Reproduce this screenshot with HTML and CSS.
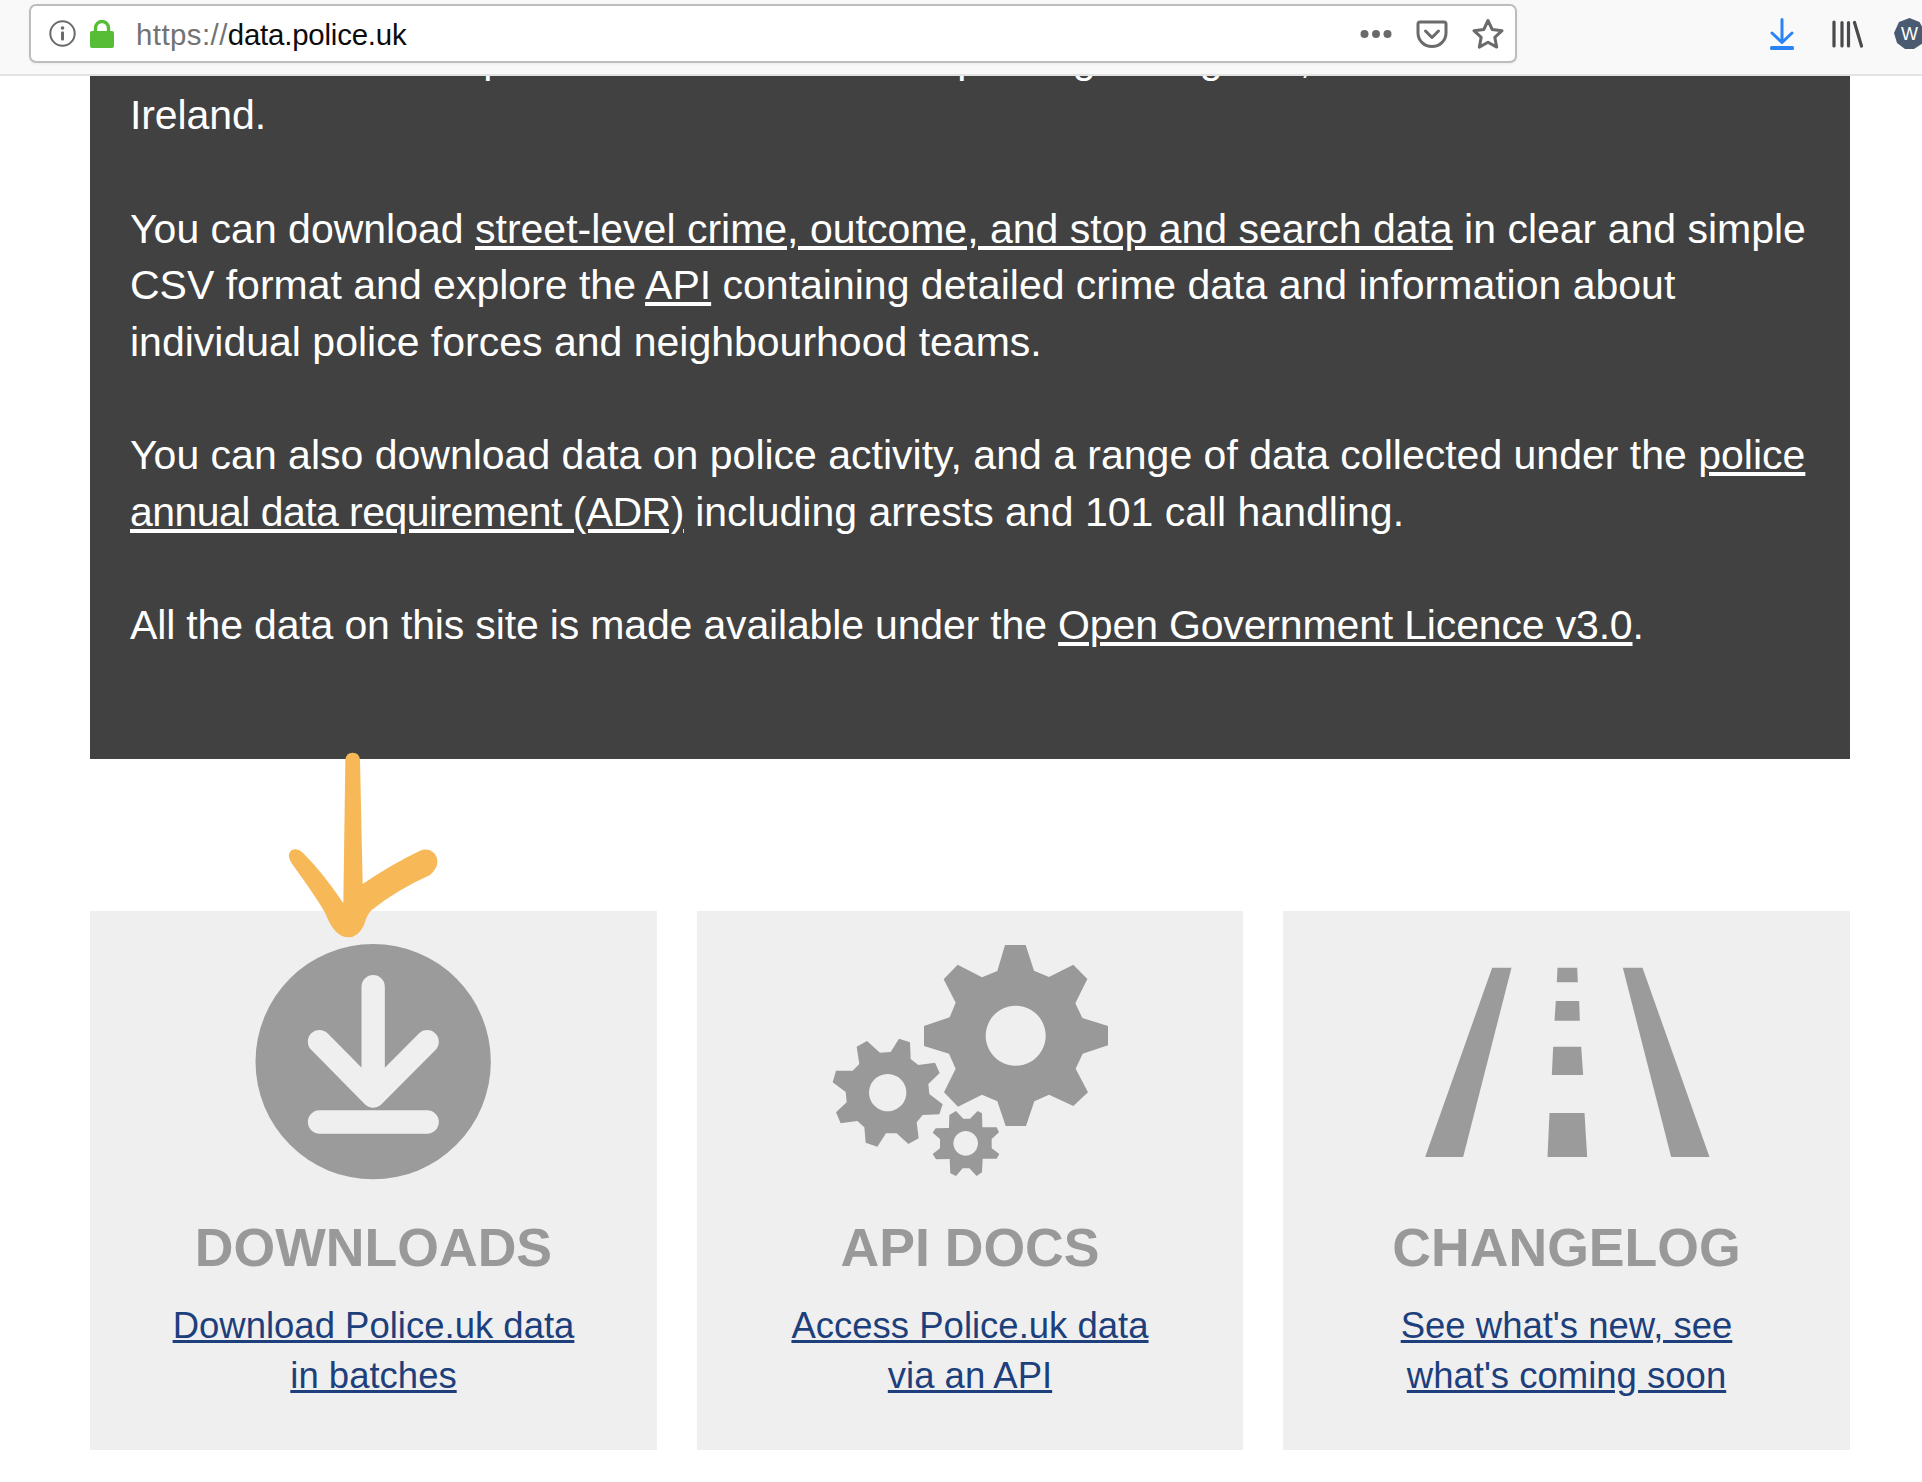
FILE: index.html
```html
<!DOCTYPE html>
<html lang="en"><head><meta charset="utf-8"><title>data.police.uk</title><link rel="stylesheet" href="styles.css"></head>
<body>
<header class="toolbar">
  <div class="urlbar">
    <svg class="i-info" viewBox="0 0 27 27"><circle cx="13.5" cy="13.5" r="12.2" fill="none" stroke="#6a6a6a" stroke-width="2"/><circle cx="13.5" cy="8" r="1.8" fill="#6a6a6a"/><rect x="12" y="11.5" width="3" height="9" rx="1" fill="#6a6a6a"/></svg>
    <svg class="i-lock" viewBox="0 0 24 28"><path d="M5.5 12V8a6.5 6.5 0 0 1 13 0v4" fill="none" stroke="#58bd36" stroke-width="3.4"/><rect y="11" width="24" height="17" rx="2" fill="#58bd36"/></svg>
    <span class="url"><span class="dim">https://</span><span class="host">data.police.uk</span></span>
    <svg class="i-dots" viewBox="0 0 32 10"><circle cx="4.5" cy="5" r="4" fill="#6a6a6a"/><circle cx="16" cy="5" r="4" fill="#6a6a6a"/><circle cx="27.5" cy="5" r="4" fill="#6a6a6a"/></svg>
    <svg class="i-pocket" viewBox="0 0 32 28"><path d="M4 2h24a2 2 0 0 1 2 2v9a14 13.500 0 0 1-28 0V4a2 2 0 0 1 2-2z" fill="none" stroke="#6a6a6a" stroke-width="3"/><path d="M9.500 11l6.500 6.500 6.500-6.500" fill="none" stroke="#6a6a6a" stroke-width="3" stroke-linecap="round" stroke-linejoin="round"/></svg>
    <svg class="i-star" viewBox="0 0 32 32"><path d="M16 2.500l4.200 9 9.800 1.200-7.200 6.700 1.900 9.700-8.700-4.800-8.700 4.800 1.900-9.700L2 12.700l9.800-1.200z" fill="none" stroke="#6a6a6a" stroke-width="3" stroke-linejoin="round"/></svg>
  </div>
  <svg class="i-dl" viewBox="0 0 24 32"><path d="M12 1.500v23M2 15l10 9.500L22 15" fill="none" stroke="#2a84f6" stroke-width="3" stroke-linecap="round" stroke-linejoin="round"/><rect y="28" width="24" height="4" rx="1.500" fill="#2a84f6"/></svg>
  <svg class="i-lib" viewBox="0 0 31 28"><g stroke="#4a4a4c" stroke-width="3.200" stroke-linecap="round"><path d="M2 2v24M10 2.500v23.500M16.500 2.500v23.500M22.500 2.500l7 23.500"/></g></svg>
  <svg class="i-w" viewBox="0 0 31 31"><path d="M15.500 0l10 4 5.500 10-2 11-9 6H11l-8-6L0 15 5 4z" fill="#4a5a70"/><text x="15.500" y="22" class="w-letter" text-anchor="middle">W</text></svg>
</header>

<main>
  <section class="hero">
    <p class="lead">This is the site for open data about crime and policing in England, Wales and Northern Ireland.</p>
    <p>You can download <a href="#">street-level crime, outcome, and stop and search data</a> in clear and simple CSV format and explore the <a href="#">API</a> containing detailed crime data and information about individual police forces and neighbourhood teams.</p>
    <p>You can also download data on police activity, and a range of data collected under the <a href="#">police <span class="adr">annual data requirement (ADR)</span></a> including arrests and 101 call handling.</p>
    <p class="licence">All the data on this site is made available under the <a href="#">Open Government Licence v3.0</a>.</p>
  </section>

  <div class="cards">
    <article class="card">
      <svg class="arrow" viewBox="0 0 900 600"><path fill="#f7b858" d="M376 60Q378 38 398 38Q418 38 420 60L428 432Q510 375 600 332Q625 322 645 342Q665 375 630 405Q530 450 455 510Q440 525 432 555Q415 592 385 592Q345 592 318 525Q305 495 215 370Q198 345 215 330Q232 322 250 340Q310 400 370 490Z"/></svg>
      <div class="ic"><svg viewBox="-49.500 540 1020 810"><circle cx="458" cy="965" r="353" fill="#9b9b9b"/><path d="M458 740V1068M297 905L458 1068L620 905M297 1146H620" fill="none" stroke="#efefef" stroke-width="70" stroke-linecap="round" stroke-linejoin="round"/></svg></div>
      <h2>DOWNLOADS</h2>
      <a href="#">Download Police.uk data<br>in batches</a>
    </article>
    <article class="card">
      <div class="ic"><svg viewBox="0 0 1020 810"><g fill="#999"><path fill-rule="evenodd" d="M615 75L677 75L702 152L747 171L820 134L862 177L826 250L847 294L924 318L924 376L848 401L827 446L864 517L820 558L747 524L703 544L678 618L617 618L592 544L546 524L474 560L432 517L467 446L447 401L372 378L372 318L449 292L467 248L431 178L473 134L546 172L592 153ZM647 257a90 90 0 1 0 .1 0Z"/><path fill-rule="evenodd" d="M170 380L201 363L240 398L272 396L297 356L330 367L332 417L355 435L405 428L419 459L385 492L388 522L428 553L418 583L368 585L350 607L356 655L325 672L290 640L258 640L232 680L197 668L193 622L172 603L122 610L108 577L140 547L137 516L98 487L108 452L158 452L178 432ZM263 462a56 56 0 1 0 .1 0Z"/><path fill-rule="evenodd" d="M448 585L468 573L490 596L510 596L533 573L546 580L547 622L590 622L597 637L575 657L575 685L598 702L590 716L548 716L546 757L530 768L508 745L488 745L468 768L451 760L449 717L408 718L398 702L420 685L420 657L398 638L407 625L447 624ZM497 633a37 37 0 1 0 .1 0Z"/></g></svg></div>
      <h2>API DOCS</h2>
      <a href="#">Access Police.uk data<br>via an API</a>
    </article>
    <article class="card">
      <div class="ic"><svg viewBox="19.500 -60 1020 810"><g fill="#9b9b9b"><path d="M305 83H363L218 651H104Z"/><path d="M697 83H756L957 651H842Z"/><path d="M501 83H560L562 127H499Z"/><path d="M496 183H566L568 242H492Z"/><path d="M488 320H572L578 405H484Z"/><path d="M477 519H582L590 651H471Z"/></g></svg></div>
      <h2>CHANGELOG</h2>
      <a href="#">See what's new, see<br>what's coming soon</a>
    </article>
  </div>
</main>
</body></html>
```
FILE: styles.css
```css
html,body{margin:0;height:1482px;overflow:hidden;background:#fff;font-family:"Liberation Sans",sans-serif}
svg{display:block;flex:none}

.toolbar{height:76px;background:#f9f9fa;border-bottom:2px solid #e3e3e3;box-sizing:border-box;padding:4px 0 0 29px;display:flex;align-items:flex-start;overflow:hidden}
.urlbar{flex:none;width:1488px;height:59px;background:#fff;border:2px solid #bdbdbd;border-radius:7px;box-sizing:border-box;display:flex;align-items:center;padding:0 11px 0 17.5px;font-size:29.4px;color:#0c0c0d;box-shadow:0 1px 3px rgba(0,0,0,.06)}
.dim{color:#737373;letter-spacing:.45px}
.host{letter-spacing:-.2px}
.url{margin-left:22px;margin-top:3px}
.i-info{width:27px;height:27px}
.i-lock{width:24px;height:28px;margin-left:14.5px}
.i-dots{width:32px;height:10px;margin-left:auto}
.i-pocket{width:32px;height:28px;margin-left:24px}
.i-star{width:32px;height:32px;margin-left:24px}
.i-dl{width:24px;height:32px;margin:14px 0 0 253px}
.i-lib{width:31px;height:28px;margin:16px 0 0 38px}
.i-w{width:31px;height:31px;margin:14px 0 0 31px}
.w-letter{font:18px "Liberation Sans",sans-serif;fill:#fff}

main{margin:0 72px 0 90px}
.hero{background:#414141;color:#fff;height:683px;overflow:hidden;padding:0 40px;box-sizing:border-box;font-size:41px;line-height:56.5px}
.hero p{margin:0 0 57px}
.hero .lead{margin-top:-45.5px;letter-spacing:-.1px}
.hero a{color:inherit;text-decoration:underline}
.adr{letter-spacing:-.55px}
.licence{letter-spacing:-.16px}

.cards{display:grid;grid-template-columns:567px 546px 567px;gap:40px;margin-top:152px}
.card{position:relative;background:#efefef;height:539px;text-align:center;font-size:36.5px;line-height:50px}
.card a{color:#1d3f7c;text-decoration:underline}
.ic{height:306px;padding-top:9px;box-sizing:border-box;display:flex;justify-content:center}
.ic svg{width:340px;height:270px}
h2{margin:0 0 24px;font-size:53.6px;line-height:60px;color:#999}
.arrow{position:absolute;left:130px;top:-171px;width:300px;height:200px}
```
